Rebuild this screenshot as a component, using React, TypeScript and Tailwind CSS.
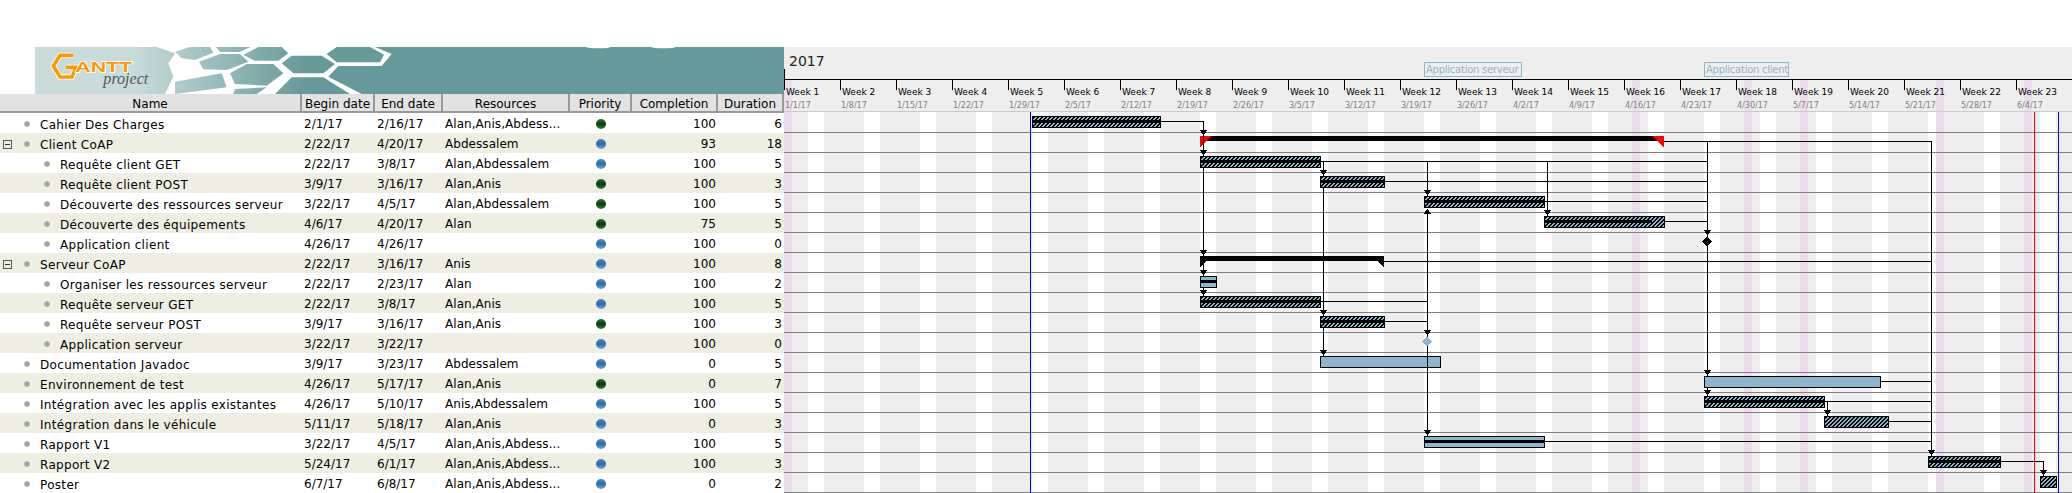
import React from 'react';
import { ReactElement } from 'react';

type Priority = 'blue' | 'green';

interface Task {
    name: string;
    begin: string;
    end: string;
    resources: string;
    priority: Priority;
    completion: number;
    duration: number;
    depth: number;
    group?: boolean;
}

const tasks: Task[] = [
    { name: 'Cahier Des Charges', begin: '2/1/17', end: '2/16/17', resources: 'Alan,Anis,Abdess...', priority: 'green', completion: 100, duration: 6, depth: 0 },
    { name: 'Client CoAP', begin: '2/22/17', end: '4/20/17', resources: 'Abdessalem', priority: 'blue', completion: 93, duration: 18, depth: 0, group: true },
    { name: 'Requête client GET', begin: '2/22/17', end: '3/8/17', resources: 'Alan,Abdessalem', priority: 'blue', completion: 100, duration: 5, depth: 1 },
    { name: 'Requête client POST', begin: '3/9/17', end: '3/16/17', resources: 'Alan,Anis', priority: 'green', completion: 100, duration: 3, depth: 1 },
    { name: 'Découverte des ressources serveur', begin: '3/22/17', end: '4/5/17', resources: 'Alan,Abdessalem', priority: 'green', completion: 100, duration: 5, depth: 1 },
    { name: 'Découverte des équipements', begin: '4/6/17', end: '4/20/17', resources: 'Alan', priority: 'green', completion: 75, duration: 5, depth: 1 },
    { name: 'Application client', begin: '4/26/17', end: '4/26/17', resources: '', priority: 'blue', completion: 100, duration: 0, depth: 1 },
    { name: 'Serveur CoAP', begin: '2/22/17', end: '3/16/17', resources: 'Anis', priority: 'blue', completion: 100, duration: 8, depth: 0, group: true },
    { name: 'Organiser les ressources serveur', begin: '2/22/17', end: '2/23/17', resources: 'Alan', priority: 'blue', completion: 100, duration: 2, depth: 1 },
    { name: 'Requête serveur GET', begin: '2/22/17', end: '3/8/17', resources: 'Alan,Anis', priority: 'blue', completion: 100, duration: 5, depth: 1 },
    { name: 'Requête serveur POST', begin: '3/9/17', end: '3/16/17', resources: 'Alan,Anis', priority: 'green', completion: 100, duration: 3, depth: 1 },
    { name: 'Application serveur', begin: '3/22/17', end: '3/22/17', resources: '', priority: 'blue', completion: 100, duration: 0, depth: 1 },
    { name: 'Documentation Javadoc', begin: '3/9/17', end: '3/23/17', resources: 'Abdessalem', priority: 'blue', completion: 0, duration: 5, depth: 0 },
    { name: 'Environnement de test', begin: '4/26/17', end: '5/17/17', resources: 'Alan,Anis', priority: 'green', completion: 0, duration: 7, depth: 0 },
    { name: 'Intégration avec les applis existantes', begin: '4/26/17', end: '5/10/17', resources: 'Anis,Abdessalem', priority: 'blue', completion: 100, duration: 5, depth: 0 },
    { name: 'Intégration dans le véhicule', begin: '5/11/17', end: '5/18/17', resources: 'Alan,Anis', priority: 'blue', completion: 0, duration: 3, depth: 0 },
    { name: 'Rapport V1', begin: '3/22/17', end: '4/5/17', resources: 'Alan,Anis,Abdess...', priority: 'blue', completion: 100, duration: 5, depth: 0 },
    { name: 'Rapport V2', begin: '5/24/17', end: '6/1/17', resources: 'Alan,Anis,Abdess...', priority: 'blue', completion: 100, duration: 3, depth: 0 },
    { name: 'Poster', begin: '6/7/17', end: '6/8/17', resources: 'Alan,Anis,Abdess...', priority: 'blue', completion: 0, duration: 2, depth: 0 },
];

const weekDates = [
    '1/1/17', '1/8/17', '1/15/17', '1/22/17', '1/29/17', '2/5/17', '2/12/17', '2/19/17', '2/26/17', '3/5/17', '3/12/17', '3/19/17',
    '3/26/17', '4/2/17', '4/9/17', '4/16/17', '4/23/17', '4/30/17', '5/7/17', '5/14/17', '5/21/17', '5/28/17', '6/4/17',
];

// which day of the week is a holiday, by week index
const holidayClass: Record<number, string> = {
    0: 'left-0',
    15: 'left-2',
    17: 'left-2',
    18: 'left-2',
    20: 'left-8',
    22: 'left-2',
};

const columns = 'grid grid-cols-[302px_73px_68px_127px_62px_86px_66px]';
const headerCell = 'bg-[#e2e2e2] border-r-2 border-b-2 border-[#999999] text-center leading-[20px] whitespace-nowrap overflow-hidden';

// every row of the chart is 20px, the first one starting at y=112
const BLUE = '#8cb6ce';

function Logo(): ReactElement {
    return (
        <svg className="block ml-[35px]" width={749} height={47} viewBox="105 51 2247 141">
            <defs>
                <linearGradient id="banner" gradientUnits="userSpaceOnUse" x1="400" y1="0" x2="920" y2="0">
                    <stop offset="0" stopColor="#c9dcdc" />
                    <stop offset="1" stopColor="#669999" />
                </linearGradient>
            </defs>
            <rect x="105" y="51" width="2247" height="141" fill="url(#banner)" />
            <polygon points="470,51 1125,51 1175,72 1145,108 1015,108 985,140 1085,192 495,192 520,140 505,100 525,70" fill="#fff" />
            <g fill="url(#banner)">
                <polygon points="525,65 570,51 630,51 640,68 585,90 545,85" />
                <polygon points="648,51 752,51 718,66 660,66" />
                <polygon points="597,95 660,72 720,72 745,95 680,120 610,118" />
                <polygon points="730,75 775,51 845,51 865,70 835,92 765,92" />
                <polygon points="845,100 875,77 965,77 1005,102 970,130 880,130" />
                <polygon points="690,130 740,102 820,102 850,130 800,167 705,162" />
                <polygon points="825,192 875,142 970,142 1050,192" />
                <polygon points="980,72 1010,51 1110,51 1152,74 1140,97 1010,97" />
                <polygon points="525,155 665,130 680,172 525,192" />
                <polygon points="705,177 800,172 770,192 700,192" />
            </g>
            <ellipse cx="1795" cy="51" rx="36" ry="4" fill="#fff" />
            <ellipse cx="1990" cy="51" rx="36" ry="4" fill="#fff" />
            <polyline points="220,76 180,76 160,108 180,141 216,141 228,112 198,112" fill="none" stroke="#fff" strokeWidth="16" />
            <polyline points="220,76 180,76 160,108 180,141 216,141 228,112 198,112" fill="none" stroke="#ff9900" strokeWidth="11" />
            <text x="226" y="125" fontFamily="'Liberation Sans', sans-serif" fontWeight="700" fontSize="46" fill="#ff9900" stroke="#fff" strokeWidth="4" paintOrder="stroke" textLength="170" lengthAdjust="spacingAndGlyphs">
                ANTT
            </text>
            <text x="310" y="161" fontFamily="'Liberation Serif', serif" fontStyle="italic" fontSize="48" fill="#555" textLength="135" lengthAdjust="spacingAndGlyphs">
                project
            </text>
        </svg>
    );
}

function TableRow({ task, index }: { task: Task; index: number }): ReactElement {
    return (
        <div className={`${columns} h-5 leading-[22px] ${index % 2 === 1 ? 'bg-[#eeefe2]' : 'bg-white'}`}>
            <div className={`flex items-center whitespace-nowrap ${task.depth === 1 ? 'pl-[44px]' : 'pl-6'}`}>
                {task.group && (
                    <span className="-ml-[21px] mr-[12px] w-[9px] h-[9px] border border-[#555] flex items-center justify-center">
                        <span className="w-[5px] h-px bg-[#333]" />
                    </span>
                )}
                <span className="w-[6px] h-[6px] rounded-full bg-[#a0a0a0] border border-[#b4b4b4]" />
                <span className="ml-[10px] pt-[2px] leading-[20px] tracking-[0.32px]">{task.name}</span>
            </div>
            <div className="pl-[2px]">{task.begin}</div>
            <div className="pl-[2px]">{task.end}</div>
            <div className="pl-[2px] whitespace-nowrap tracking-[0.05px]">{task.resources}</div>
            <div className="flex items-center justify-center pr-px">
                <span
                    className={
                        task.priority === 'blue'
                            ? 'w-[10px] h-[10px] rounded-full bg-linear-to-b from-[#4f88c6] via-[#2e6aa8] to-[#6ea5dd]'
                            : 'w-[10px] h-[10px] rounded-full bg-linear-to-b from-[#2a7a30] via-[#0a3a0e] to-[#2a8a34]'
                    }
                />
            </div>
            <div className="text-right pr-[2px]">{task.completion}</div>
            <div className="text-right pr-[2px]">{task.duration}</div>
        </div>
    );
}

function Timeline(): ReactElement {
    return (
        <div className="relative bg-[#eeeeee]">
            <div className="h-[32px] pl-[5px] text-[14px] leading-[29px] text-[#222]">2017</div>
            <div className="absolute left-0 top-[22px] w-px h-[10px] bg-black" />
            <div className="absolute left-[640px] top-[15px] h-[15px] w-[98px] border border-[#8fb6ce] text-[#8fb6ce] text-[10px] tracking-[-0.25px] leading-[14px] pl-[1px] whitespace-nowrap">
                Application serveur
            </div>
            <div className="absolute left-[920px] top-[15px] h-[15px] w-[85px] border border-[#8fb6ce] text-[#8fb6ce] text-[10px] tracking-[-0.25px] leading-[14px] pl-[1px] whitespace-nowrap">
                Application client
            </div>
            <div className="flex h-[33px] border-t border-black border-b border-b-[#cccccc] box-border">
                {weekDates.map((date, i) => (
                    <div key={date} className="relative w-14 shrink-0">
                        {holidayClass[i] && <div className={`absolute top-0 bottom-0 w-2 bg-[#eddcee] ${holidayClass[i]}`} />}
                        <div className="absolute left-0 top-0 w-px h-[10px] bg-black" />
                        <div className="relative pl-[2px] pt-[6px] text-[9px] leading-[12px] text-black whitespace-nowrap">Week {i + 1}</div>
                        <div className="relative pl-px pt-[2px] text-[8px] leading-[11px] text-[#808080] whitespace-nowrap">{date}</div>
                    </div>
                ))}
            </div>
        </div>
    );
}

function Arrow({ x, y }: { x: number; y: number }): ReactElement {
    return <polygon points={`${x - 3.5},${y} ${x + 3.5},${y} ${x},${y + 6}`} fill="#000" />;
}

function Bar({ x1, x2, row, hatch, progress }: { x1: number; x2: number; row: number; hatch: boolean; progress?: number }): ReactElement {
    const y = 116 + row * 20;
    return (
        <g>
            <rect x={x1} y={y} width={x2 - x1} height={12} fill="#000" />
            <rect x={x1 + 1} y={y + 1} width={x2 - x1 - 2} height={10} fill={hatch ? 'url(#hatch)' : BLUE} />
            {progress !== undefined && <rect x={x1 + 1} y={y + 4} width={progress - x1 - 1} height={3} fill="#000" />}
        </g>
    );
}

function Summary({ x1, x2, row, color }: { x1: number; x2: number; row: number; color: string }): ReactElement {
    const y = 116 + row * 20;
    return (
        <g>
            <rect x={x1} y={y} width={x2 - x1} height={5} fill="#000" />
            <polygon points={`${x1},${y} ${x1 + 12},${y} ${x1},${y + 11}`} fill={color} />
            <polygon points={`${x2 - 12},${y} ${x2},${y} ${x2},${y + 11}`} fill={color} />
        </g>
    );
}

function Chart(): ReactElement {
    const white: number[] = [];
    for (let i = 0; i < 23; i++) white.push(808 + i * 56);

    const links = [
        'M1161 121.5H1203.5V156M1203.5 168V276M1203.5 288V296',
        'M1664 141.5H1931.5V456M1707.5 141.5V376M1707.5 388V396',
        'M1321 161.5H1707.5M1323.5 161.5V176M1323.5 188V316M1323.5 328V356',
        'M1427.5 161.5V196M1427.5 214V436M1547.5 161.5V216',
        'M1385 181.5H1707.5M1545 201.5H1707.5M1665 221.5H1707.5',
        'M1384 261.5H1931.5M1321 301.5H1427.5M1385 321.5H1427.5',
        'M1881 381.5H1931.5M1825 401.5H1931.5M1827.5 401.5V416M1889 421.5H1931.5',
        'M1545 441.5H1931.5M2001 461.5H2043.5V476',
    ];

    const arrows = [
        [1203.5, 130], [1203.5, 150], [1203.5, 250], [1203.5, 270], [1203.5, 290],
        [1323.5, 170], [1323.5, 310], [1323.5, 350],
        [1427.5, 190], [1427.5, 330], [1427.5, 430],
        [1547.5, 210],
        [1707.5, 230], [1707.5, 370], [1707.5, 390],
        [1827.5, 410], [1931.5, 450], [2043.5, 470],
    ];

    return (
        <svg className="block" width={1288} height={381} viewBox="784 112 1288 381" shapeRendering="crispEdges">
            <defs>
                <pattern id="hatch" patternUnits="userSpaceOnUse" width="4" height="4">
                    <rect width="4" height="4" fill={BLUE} />
                    <path d="M2 0h2v1h-2zM1 1h2v1h-2zM0 2h2v1h-2zM3 3h1v1h-1zM0 3h1v1h-1z" fill="#000" />
                </pattern>
            </defs>
            <rect x="784" y="112" width="1288" height="381" fill="#eeeeee" />
            {white.map((x) => (
                <rect key={x} x={x} y="112" width="16" height="381" fill="#fff" />
            ))}
            {[784, 1632, 1744, 1800, 1936, 2024].map((x) => (
                <rect key={x} x={x} y="112" width="8" height="381" fill="#eddcee" />
            ))}
            {tasks.map((t, i) => (
                <rect key={t.name} x="784" y={132 + i * 20} width="1288" height="1" fill="#808080" />
            ))}
            <rect x="1030" y="112" width="1" height="381" fill="#0000ff" />
            <rect x="2058" y="112" width="1" height="381" fill="#0000ff" />
            <rect x="2034" y="112" width="1" height="381" fill="#ff0000" />

            <Bar x1={1032} x2={1161} row={0} hatch progress={1160} />
            <Summary x1={1200} x2={1664} row={1} color="#ff0000" />
            <Bar x1={1200} x2={1321} row={2} hatch progress={1320} />
            <Bar x1={1320} x2={1385} row={3} hatch progress={1384} />
            <Bar x1={1424} x2={1545} row={4} hatch progress={1544} />
            <Bar x1={1544} x2={1665} row={5} hatch progress={1652} />
            <Summary x1={1200} x2={1384} row={7} color="#000" />
            <Bar x1={1200} x2={1217} row={8} hatch={false} progress={1216} />
            <Bar x1={1200} x2={1321} row={9} hatch progress={1320} />
            <Bar x1={1320} x2={1385} row={10} hatch progress={1384} />
            <Bar x1={1320} x2={1441} row={12} hatch={false} />
            <Bar x1={1704} x2={1881} row={13} hatch={false} />
            <Bar x1={1704} x2={1825} row={14} hatch progress={1824} />
            <Bar x1={1824} x2={1889} row={15} hatch />
            <Bar x1={1424} x2={1545} row={16} hatch={false} progress={1544} />
            <Bar x1={1928} x2={2001} row={17} hatch progress={2000} />
            <Bar x1={2040} x2={2057} row={18} hatch />

            <path d={links.join('')} fill="none" stroke="#000" strokeWidth="1" />
            {arrows.map(([x, y]) => (
                <Arrow key={`${x}-${y}`} x={x} y={y} />
            ))}
            <polygon points="1427.5,209 1431.5,214 1423.5,214" fill="#000" />
            <polygon points="1707,236.5 1712,241.5 1707,246.5 1702,241.5" fill="#000" />
            <polygon points="1427,336.5 1432,341.5 1427,346.5 1422,341.5" fill={BLUE} />
        </svg>
    );
}

export default function App(): ReactElement {
    return (
        <div className="w-[2072px] h-[493px] overflow-hidden bg-white pt-[47px] flex font-['DejaVu_Sans',sans-serif] text-[12px] text-black">
            <div className="w-[784px] shrink-0">
                <Logo />
                <div className={`${columns} h-[19px]`}>
                    <div className={headerCell}>Name</div>
                    <div className={headerCell}>Begin date</div>
                    <div className={headerCell}>End date</div>
                    <div className={headerCell}>Resources</div>
                    <div className={headerCell}>Priority</div>
                    <div className={headerCell}>Completion</div>
                    <div className={headerCell}>Duration</div>
                </div>
                {tasks.map((task, i) => (
                    <TableRow key={task.name} task={task} index={i} />
                ))}
            </div>
            <div className="w-[1288px] shrink-0">
                <Timeline />
                <Chart />
            </div>
        </div>
    );
}
